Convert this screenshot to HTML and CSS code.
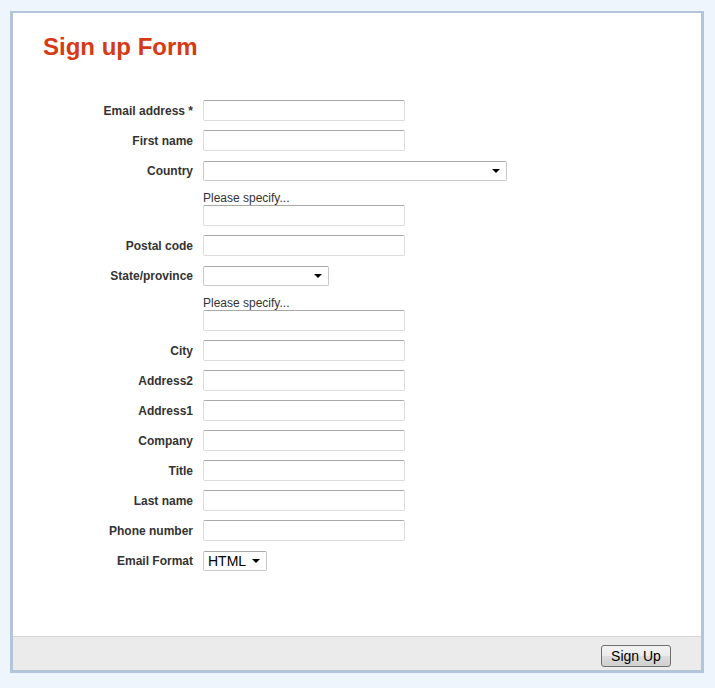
FILE: index.html
```html
<!DOCTYPE html>
<html lang="en">
<head>
  <meta charset="UTF-8" />
  <title>Sign up Form</title>
  <link rel="stylesheet" href="styles.css">
</head>
<body>
  <div class="card">
    <div class="content">
      <h1>Sign up Form</h1>
      <form class="signup">
        <label>Email address *</label>
        <div class="field"><input type="text" /></div>

        <label>First name</label>
        <div class="field"><input type="text" /></div>

        <label>Country</label>
        <div class="field"><div class="select wide"><span></span><i class="arrow"></i></div></div>

        <label></label>
        <div class="field specify">
          <span class="hint">Please specify...</span>
          <input type="text" />
        </div>

        <label>Postal code</label>
        <div class="field"><input type="text" /></div>

        <label>State/province</label>
        <div class="field"><div class="select mid"><span></span><i class="arrow"></i></div></div>

        <label></label>
        <div class="field specify">
          <span class="hint">Please specify...</span>
          <input type="text" />
        </div>

        <label>City</label>
        <div class="field"><input type="text" /></div>

        <label>Address2</label>
        <div class="field"><input type="text" /></div>

        <label>Address1</label>
        <div class="field"><input type="text" /></div>

        <label>Company</label>
        <div class="field"><input type="text" /></div>

        <label>Title</label>
        <div class="field"><input type="text" /></div>

        <label>Last name</label>
        <div class="field"><input type="text" /></div>

        <label>Phone number</label>
        <div class="field"><input type="text" /></div>

        <label>Email Format</label>
        <div class="field"><div class="select small"><span>HTML</span><i class="arrow"></i></div></div>
      </form>
    </div>
    <div class="bar">
      <button type="button">Sign Up</button>
    </div>
  </div>
</body>
</html>
```

FILE: styles.css
```css
body {
  margin: 0;
  background: #eef5fd;
  font-family: "Liberation Sans", Arial, sans-serif;
  color: #333;
}
.card {
  margin: 11px 11px 0 10px;
  height: 657px;
  background: white;
  border: 3px solid #b3c6d9;
  border-top-width: 2px;
  display: flex;
  flex-direction: column;
}
.content {
  flex: 1;
  padding: 0 30px;
}
h1 {
  margin: 20px 0 0 0;
  font-size: 24px;
  line-height: 28px;
  color: #d63a14;
}
.signup {
  margin-top: 39px;
  display: grid;
  grid-template-columns: 150px 1fr;
  column-gap: 10px;
  row-gap: 9px;
}
.signup label {
  box-sizing: border-box;
  height: 21px;
  padding-top: 1px;
  font-size: 12px;
  font-weight: bold;
  text-align: right;
  line-height: 20px;
  color: #333;
}
.field {
  display: flex;
  flex-direction: column;
  align-items: flex-start;
}
.specify {
  margin-top: 1px;
}
.hint {
  font-size: 12px;
  line-height: 14px;
  color: #333;
}
input {
  width: 202px;
  height: 21px;
  box-sizing: border-box;
  margin: 0;
  border: 1px solid #dcdcdc;
  border-top-color: #a8a8a8;
  border-radius: 2px;
  background: white;
}
.select {
  height: 20px;
  margin-top: 1px;
  box-sizing: border-box;
  border: 1px solid #c8c8c8;
  border-top-color: #a8a8a8;
  border-radius: 2px;
  display: flex;
  align-items: center;
  justify-content: space-between;
  padding: 0 6px 0 4px;
  font-size: 14px;
  color: #000;
}
.wide { width: 304px; }
.mid { width: 126px; }
.small { width: 64px; }
.arrow {
  width: 0;
  height: 0;
  border-left: 4px solid transparent;
  border-right: 4px solid transparent;
  border-top: 4px solid #000;
}
.bar {
  height: 33px;
  background: #ebebeb;
  border-top: 1px solid #d6d6d6;
  display: flex;
  justify-content: flex-end;
  align-items: flex-start;
  padding-right: 30px;
}
button {
  margin-top: 8px;
  width: 70px;
  height: 22px;
  font-family: "Liberation Sans", Arial, sans-serif;
  font-size: 14px;
  color: #000;
  border: 1px solid #707070;
  border-radius: 3px;
  background: linear-gradient(#f2f2f2, #ebebeb 50%, #dddddd 51%, #cfcfcf);
  padding: 0;
}
```
